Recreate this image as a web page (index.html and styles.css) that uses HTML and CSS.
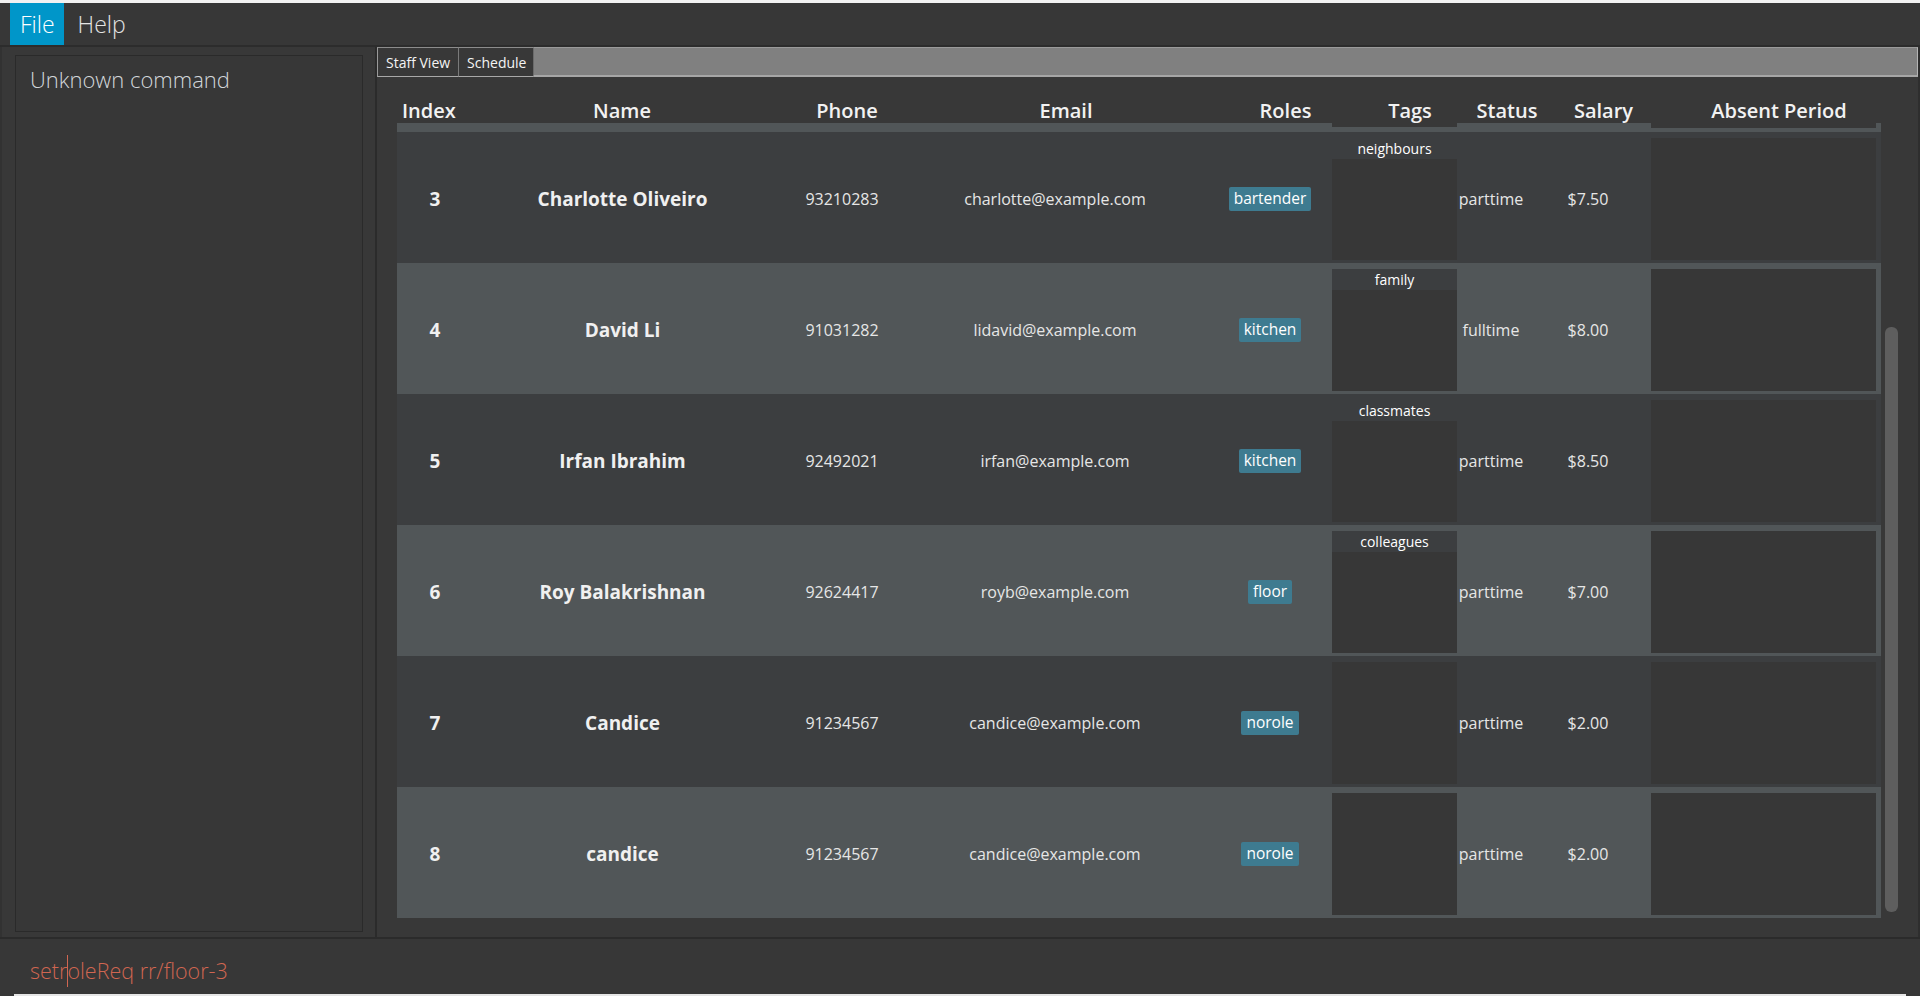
FILE: index.html
```html
<!DOCTYPE html>
<html>
<head>
<meta charset="utf-8">
<title>Staff</title>
<link rel="stylesheet" href="styles.css">
</head>
<body>
<div class="window">
  <div class="menubar">
    <div class="menu-item active">File</div>
    <div class="menu-item">Help</div>
  </div>
  <div class="main">
    <div class="left">
      <div class="result">Unknown command</div>
    </div>
    <div class="right">
      <div class="tabbar">
        <div class="tab">Staff View</div>
        <div class="tab">Schedule</div>
        <div class="tab-fill"></div>
      </div>
      <div class="table-area">
        <div class="table">
          <div class="thead">
            <div class="th th-index">Index</div>
            <div class="th">Name</div>
            <div class="th">Phone</div>
            <div class="th">Email</div>
            <div class="th">Roles</div>
            <div class="th">Tags</div>
            <div class="th">Status</div>
            <div class="th">Salary</div>
            <div class="th th-absent">Absent Period</div>
          </div>
          <div class="strip">
            <div class="strip-a"></div>
            <div class="strip-tags"></div>
            <div class="strip-b"></div>
            <div class="strip-absent"></div>
          </div>
          <div class="rows">
            <div class="row odd">
              <div class="c-index">3</div>
              <div class="c-name">Charlotte Oliveiro</div>
              <div class="c-phone">93210283</div>
              <div class="c-email">charlotte@example.com</div>
              <div class="c-roles"><span class="badge">bartender</span></div>
              <div class="c-tags"><div class="tag">neighbours</div></div>
              <div class="c-status">parttime</div>
              <div class="c-salary">$7.50</div>
              <div class="c-absent"><div class="absent-box"></div></div>
            </div>
            <div class="row even">
              <div class="c-index">4</div>
              <div class="c-name">David Li</div>
              <div class="c-phone">91031282</div>
              <div class="c-email">lidavid@example.com</div>
              <div class="c-roles"><span class="badge">kitchen</span></div>
              <div class="c-tags"><div class="tag">family</div></div>
              <div class="c-status">fulltime</div>
              <div class="c-salary">$8.00</div>
              <div class="c-absent"><div class="absent-box"></div></div>
            </div>
            <div class="row odd">
              <div class="c-index">5</div>
              <div class="c-name">Irfan Ibrahim</div>
              <div class="c-phone">92492021</div>
              <div class="c-email">irfan@example.com</div>
              <div class="c-roles"><span class="badge">kitchen</span></div>
              <div class="c-tags"><div class="tag">classmates</div></div>
              <div class="c-status">parttime</div>
              <div class="c-salary">$8.50</div>
              <div class="c-absent"><div class="absent-box"></div></div>
            </div>
            <div class="row even">
              <div class="c-index">6</div>
              <div class="c-name">Roy Balakrishnan</div>
              <div class="c-phone">92624417</div>
              <div class="c-email">royb@example.com</div>
              <div class="c-roles"><span class="badge">floor</span></div>
              <div class="c-tags"><div class="tag">colleagues</div></div>
              <div class="c-status">parttime</div>
              <div class="c-salary">$7.00</div>
              <div class="c-absent"><div class="absent-box"></div></div>
            </div>
            <div class="row odd">
              <div class="c-index">7</div>
              <div class="c-name">Candice</div>
              <div class="c-phone">91234567</div>
              <div class="c-email">candice@example.com</div>
              <div class="c-roles"><span class="badge">norole</span></div>
              <div class="c-tags"></div>
              <div class="c-status">parttime</div>
              <div class="c-salary">$2.00</div>
              <div class="c-absent"><div class="absent-box"></div></div>
            </div>
            <div class="row even">
              <div class="c-index">8</div>
              <div class="c-name">candice</div>
              <div class="c-phone">91234567</div>
              <div class="c-email">candice@example.com</div>
              <div class="c-roles"><span class="badge">norole</span></div>
              <div class="c-tags"></div>
              <div class="c-status">parttime</div>
              <div class="c-salary">$2.00</div>
              <div class="c-absent"><div class="absent-box"></div></div>
            </div>
          </div>
        </div>
        <div class="vscroll"><div class="thumb"></div></div>
      </div>
    </div>
  </div>
  <div class="command">
    <div class="command-field">setr<span class="caret"></span>oleReq rr/floor-3</div>
  </div>
</div>
</body>
</html>
```
FILE: styles.css
```css
* { box-sizing: border-box; }

html, body {
  margin: 0;
  padding: 0;
  width: 1920px;
  height: 996px;
  overflow: hidden;
  background: #383838;
  font-family: "Open Sans", "Noto Sans", sans-serif;
  color: #e8e8e8;
}

.window {
  display: flex;
  flex-direction: column;
  height: 996px;
  border-top: 3px solid #f2f2f2;
}

/* ---------- menu bar ---------- */
.menubar {
  display: flex;
  height: 44px;
  padding-left: 10px;
  background: #373737;
  border-bottom: 2px solid #2c2c2c;
}

.menu-item {
  display: flex;
  align-items: center;
  padding: 0 12px 0 14px;
  font-size: 23px;
  font-weight: 300;
  color: #e4e4e4;
}

.menu-item.active {
  background: #0096c9;
  color: #ffffff;
  padding: 0 9px 0 10px;
}

/* ---------- main ---------- */
.main {
  display: flex;
  height: 892px;
  border-bottom: 2px solid #2b2b2b;
}

.left {
  width: 377px;
  flex: none;
  padding: 8px 12px 5px 13px;
  border-left: 2px solid #323232;
  border-right: 2px solid #2b2b2b;
  background: #383838;
}

.result {
  height: 100%;
  border: 1px solid #2a2a2a;
  background: #373737;
  padding: 8px 14px;
  font-size: 22px;
  font-weight: 300;
  line-height: 30px;
  color: #d2d6da;
}

.right {
  flex: 1;
  display: flex;
  flex-direction: column;
  border-right: 2px solid #2e2e2e;
  min-width: 0;
}

/* ---------- tabs ---------- */
.tabbar {
  display: flex;
  height: 30px;
  flex: none;
}

.tab {
  display: flex;
  align-items: center;
  padding: 0 8px 0 8px;
  background: #383838;
  border-top: 1px solid #8c8c8c;
  border-left: 1px solid #9a9a9a;
  border-bottom: 1px solid #a8a8a8;
  font-size: 14px;
  color: #f4f4f4;
}

.tab + .tab {
  border-left: 1px solid #7a7a7a;
  padding: 0 7px 0 8px;
}

.tab-fill {
  flex: 1;
  background: #808080;
  border-top: 1px solid #9a9a9a;
  border-right: 1px solid #b4b4b4;
  border-bottom: 2px solid #a6a6a6;
  border-left: 1px solid #6a6a6a;
}

/* ---------- table area ---------- */
.table-area {
  flex: 1;
  display: flex;
  padding-left: 20px;
  background: #383838;
}

.table {
  width: 1484px;
  flex: none;
  display: flex;
  flex-direction: column;
}

.thead {
  display: grid;
  grid-template-columns: 100px 250px 200px 238px 201px 48px 146px 47px 254px;
  height: 46px;
  align-items: end;
}

.th {
  display: flex;
  justify-content: center;
  white-space: nowrap;
  font-size: 20px;
  font-weight: 600;
  line-height: 25px;
  color: #f2f2f2;
}

.th-index {
  justify-content: flex-start;
  padding-left: 5px;
}

.th-absent {
  padding-left: 50px;
}

.strip {
  display: grid;
  grid-template-columns: 935px 125px 194px 225px 5px;
  height: 9px;
  background: #515658;
}

.strip-tags {
  border-top: 4px solid #383838;
}

.strip-absent {
  border-top: 5px solid #383838;
  grid-column: 4;
}

.rows {
  display: flex;
  flex-direction: column;
}

.row {
  display: grid;
  grid-template-columns: 76px 299px 140px 286px 134px 125px 68px 126px 230px;
  height: 131px;
  padding: 7px 0 4px;
  align-items: center;
  font-size: 16px;
  color: #e6e6e6;
  white-space: nowrap;
}

.row.odd { background: #3c3e40; }
.row.even { background: #515658; }

.c-index, .c-name {
  text-align: center;
  font-size: 19px;
  font-weight: 700;
  color: #f0f0f0;
}

.c-phone, .c-email, .c-status, .c-salary {
  text-align: center;
}

.c-roles {
  display: flex;
  justify-content: center;
  padding-left: 10px;
}

.badge {
  display: inline-block;
  height: 24px;
  padding: 0 5px;
  background: #3e7b90;
  border-radius: 2px;
  font-size: 15.5px;
  line-height: 23px;
  color: #ffffff;
}

.c-tags {
  align-self: stretch;
  margin-top: -1px;
  margin-bottom: -1px;
  background: #373737;
}

.tag {
  height: 21px;
  background: #3c3e40;
  text-align: center;
  font-size: 14px;
  line-height: 21px;
  color: #ffffff;
}

.c-absent {
  align-self: stretch;
  padding-right: 5px;
  margin-top: -1px;
  margin-bottom: -1px;
}

.absent-box {
  height: 100%;
  background: #373737;
}

/* ---------- scrollbar ---------- */
.vscroll {
  width: 36px;
  padding: 250px 0 0 4px;
}

.thumb {
  width: 13px;
  height: 585px;
  background: #5e5e5e;
  border-radius: 6px;
}

/* ---------- command box ---------- */
.command {
  flex: 1;
  padding: 0 14px 0 14px;
  background: #373737;
}

.command-field {
  height: 100%;
  padding: 16px 0 0 16px;
  border-bottom: 2px solid #e6e6e6;
  font-size: 21.5px;
  font-weight: 300;
  line-height: 28px;
  color: #d06651;
  white-space: nowrap;
}

.caret {
  display: inline-block;
  width: 1px;
  height: 32px;
  margin-right: -1px;
  vertical-align: -8px;
  background: #d06651;
}
```
